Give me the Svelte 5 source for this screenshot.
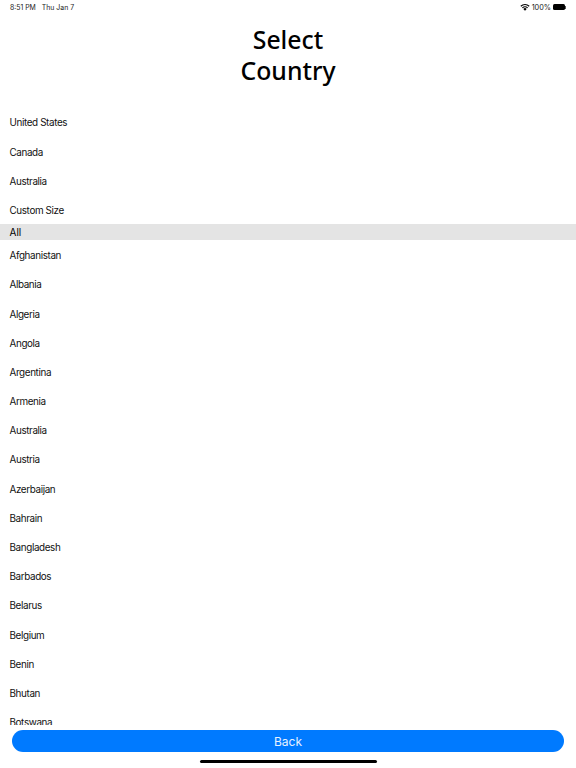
<script>
	const featured = ['United States', 'Canada', 'Australia', 'Custom Size'];
	const countries = ['Afghanistan', 'Albania', 'Algeria', 'Angola', 'Argentina', 'Armenia', 'Australia', 'Austria', 'Azerbaijan', 'Bahrain', 'Bangladesh', 'Barbados', 'Belarus', 'Belgium', 'Benin', 'Bhutan', 'Botswana'];
</script>

<div class="screen">
	<div class="status">
		<div class="status-left"><span>8:51 PM</span><span>Thu Jan 7</span></div>
		<div class="status-right">
			<svg width="10" height="8" viewBox="0 0 20 15" aria-hidden="true">
				<path d="M10 15 L6.6 11.3 A5 5 0 0 1 13.4 11.3 Z" fill="#000" />
				<path d="M4.7 9.3 A8 8 0 0 1 15.3 9.3" fill="none" stroke="#000" stroke-width="2.2" />
				<path d="M1.6 6 A12.2 12.2 0 0 1 18.4 6" fill="none" stroke="#000" stroke-width="2.2" />
			</svg>
			<span>100%</span>
			<div class="battery"></div>
			<div class="battery-cap"></div>
		</div>
	</div>

	<h1>Select<br />Country</h1>

	<div class="list">
		{#each featured as name}
			<div class="row">{name}</div>
		{/each}
		<div class="section">All</div>
		{#each countries as name}
			<div class="row">{name}</div>
		{/each}
	</div>

	<div class="footer">
		<button type="button" class="back">Back</button>
		<div class="home"></div>
	</div>
</div>

<style>
	:global(body) {
		margin: 0;
		background: #fff;
	}

	.screen {
		width: 576px;
		height: 768px;
		display: flex;
		flex-direction: column;
		overflow: hidden;
		background: #fff;
		color: #000;
		font-family: Inter, "Liberation Sans", sans-serif;
	}

	.status {
		height: 14px;
		flex: none;
		display: flex;
		justify-content: space-between;
		align-items: center;
		padding: 0 10px;
		font-size: 6.9px;
		color: #222;
	}

	.status-left {
		display: flex;
		gap: 6px;
	}

	.status-right {
		display: flex;
		align-items: center;
		gap: 2px;
		font-size: 7.3px;
	}

	.battery {
		width: 12px;
		height: 6px;
		border-radius: 1.5px;
		background: #000;
	}

	.battery-cap {
		width: 1px;
		height: 3px;
		margin-left: -2px;
		background: #555;
	}

	h1 {
		flex: none;
		margin: 10px 0 0;
		height: 83.4px;
		text-align: center;
		font-family: "Noto Sans", sans-serif;
		font-size: 24.8px;
		font-weight: 500;
		line-height: 31px;
	}

	.list {
		flex: 1;
		min-height: 0;
		overflow: hidden;
	}

	.row {
		height: 29.2px;
		line-height: 31px;
		padding-left: 9.5px;
		font-size: 9.9px;
		letter-spacing: -0.38px;
		color: #111;
	}

	.section {
		height: 16px;
		line-height: 17px;
		padding-left: 9.5px;
		font-size: 10px;
		background: #e4e4e4;
		color: #000;
	}

	.footer {
		flex: none;
		height: 43px;
		padding: 5px 12px 0;
		box-sizing: border-box;
		display: flex;
		flex-direction: column;
		align-items: center;
	}

	.back {
		width: 100%;
		height: 22px;
		padding: 0;
		border: none;
		border-radius: 11px;
		background: #007aff;
		color: #e8f2ff;
		font-family: Inter, "Liberation Sans", sans-serif;
		font-size: 12px;
	}

	.home {
		width: 177px;
		height: 3px;
		margin-top: 8px;
		border-radius: 2px;
		background: #000;
	}
</style>
